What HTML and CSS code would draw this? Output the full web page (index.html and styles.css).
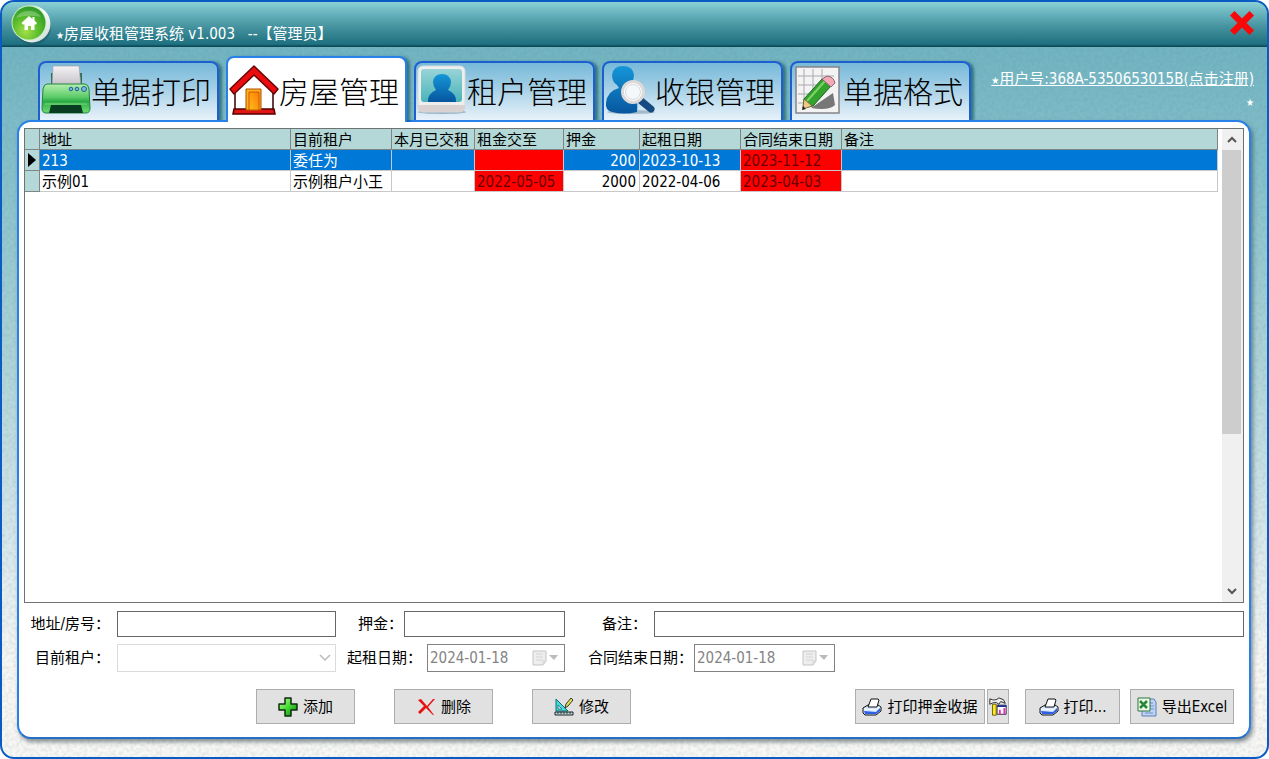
FILE: index.html
```html
<!DOCTYPE html>
<html lang="zh-CN">
<head>
<meta charset="utf-8">
<title>房屋收租管理系统</title>
<link rel="stylesheet" href="styles.css">
</head>
<body>
<div class="window">
  <svg class="grain" aria-hidden="true"><filter id="noise"><feTurbulence type="fractalNoise" baseFrequency="0.28" numOctaves="2"/><feColorMatrix values="0 0 0 0 0.1  0 0 0 0 0.25  0 0 0 0 0.3  1.6 0 0 0 -0.6"/></filter><rect width="100%" height="100%" filter="url(#noise)"/></svg>

  <header class="titlebar">
    <svg class="logo" viewBox="0 0 42 42" aria-hidden="true">
      <defs>
        <radialGradient id="orb" cx=".4" cy=".75" r=".75"><stop offset="0" stop-color="#a4e048"/><stop offset=".6" stop-color="#52b82a"/><stop offset="1" stop-color="#2f9a2c"/></radialGradient>
        <linearGradient id="ring" x2="1" y2="1"><stop offset="0" stop-color="#a8d8b0"/><stop offset=".5" stop-color="#fff"/><stop offset="1" stop-color="#c4d4d2"/></linearGradient>
      </defs>
      <ellipse cx="23" cy="23" rx="18" ry="18" fill="#1b5560" opacity=".5"/>
      <circle cx="22" cy="20" r="18.500" fill="url(#ring)"/>
      <circle cx="19" cy="19" r="17.500" fill="#c9ecc0"/>
      <circle cx="19" cy="19" r="16.500" fill="url(#orb)"/>
      <path d="M6 14a14 12 0 0 1 25-1Q18 10 6 14Z" fill="#fff" opacity=".25"/>
      <path d="m19 12-7.500 7 1.500 1.500h1.500V26h3.500v-4h3v4h3.500v-5.500h1.500l1-1.500-2.500-2.500V13h-2v2Z" fill="#fff"/>
    </svg>
    <h1 class="title"><span class="star">★</span>房屋收租管理系统 v1.003 &nbsp; --【管理员】</h1>
    <button class="close" type="button" aria-label="关闭"><svg viewBox="0 0 24 24"><path d="M3 3 21 21M21 3 3 21" stroke="#f80808" stroke-width="6"/></svg></button>
  </header>

  <nav class="tabs">
    <button class="tab" type="button">
      <svg viewBox="0 0 50 50" aria-hidden="true">
        <defs><linearGradient id="prn" x2="0" y2="1"><stop offset="0" stop-color="#b5efae"/><stop offset=".45" stop-color="#5ccb68"/><stop offset=".6" stop-color="#2cab45"/><stop offset="1" stop-color="#6fdc72"/></linearGradient><linearGradient id="paper" x2="0" y2="1"><stop offset="0" stop-color="#f4f2f4"/><stop offset="1" stop-color="#c4c0c6"/></linearGradient></defs>
        <path d="M10 8h31v14H10Z" fill="#2f6b55"/>
        <path d="M12 1h26l2 20H11Z" fill="url(#paper)" stroke="#9a98a0" stroke-width=".6"/>
        <path d="M6 19h38q3 0 4 5l1 19q0 5-4 5H5q-4 0-4-5l1-19q1-5 4-5Z" fill="url(#prn)" stroke="#1c8440"/>
        <path d="M10 40h30l2 8H8Z" fill="#093d22"/>
        <path d="M4 39h42" stroke="#a7eda0" opacity=".6"/>
        <g fill="#79b8e0" stroke="#205f98"><circle cx="30" cy="24" r="1.800"/><circle cx="36" cy="24" r="1.800"/><circle cx="43" cy="24" r="2.500"/></g>
      </svg>单据打印</button>
    <button class="tab active" type="button" aria-current="page">
      <svg viewBox="0 0 50 50" aria-hidden="true">
        <defs><linearGradient id="door" x1="1" y1="0" x2="0" y2="1"><stop offset="0" stop-color="#ff7b08"/><stop offset="1" stop-color="#ffbd19"/></linearGradient></defs>
        <path d="M6 23 25 7l19 16v22H6Z" fill="#fff" stroke="#300" stroke-width="1.500"/>
        <path d="M5 44h40l1 5H4Z" fill="#e21414" stroke="#500" stroke-width="1.500"/>
        <path d="M17 24h15v21H17Z" fill="#ffb21b" stroke="#b34b00"/>
        <path d="M20 27h10v18H20Z" fill="url(#door)" stroke="#c85800"/>
        <path d="M25 1 49 24l-4 5L25 10 5 29l-4-5Z" fill="#e90d10" stroke="#6b0505" stroke-width="1.500" stroke-linejoin="round"/>
      </svg>房屋管理</button>
    <button class="tab" type="button">
      <svg viewBox="0 0 50 50" aria-hidden="true">
        <defs><linearGradient id="photo" x2="0" y2="1"><stop offset="0" stop-color="#98d4d8"/><stop offset="1" stop-color="#48b4b8"/></linearGradient><linearGradient id="blue" x2="0" y2="1"><stop offset="0" stop-color="#1597d8"/><stop offset="1" stop-color="#07569f"/></linearGradient></defs>
        <ellipse cx="25" cy="47" rx="24" ry="2" fill="#6e8ca0" opacity=".6"/>
        <rect x="1" y="1" width="47" height="46" rx="5" fill="#eee" stroke="#d3dbe0"/>
        <path d="M1 40h47v2q0 5-5 5H6q-5 0-5-5Z" fill="#d9d2d2"/>
        <rect x="4" y="4" width="41" height="33" rx="3" fill="url(#photo)"/>
        <path d="M11 37q-1-8 8-12-3-4-3-8 1-8 9-8t9 8q0 4-3 8 9 4 8 12Z" fill="url(#blue)"/>
      </svg>租户管理</button>
    <button class="tab" type="button">
      <svg viewBox="0 0 50 50" aria-hidden="true">
        <ellipse cx="26" cy="47" rx="24" ry="2" fill="#6e8ca0" opacity=".5"/>
        <path d="M12 20Q7 17 7 10 8 1 18 1t11 9q0 5-3 9l-2 3q10 8 8 25-13 3-25 0Q0 45 1 38q1-12 13-15Z" fill="url(#blue)"/>
        <path d="m35 35 11 9" stroke="#174a80" stroke-width="7" stroke-linecap="round"/>
        <circle cx="28" cy="27" r="10.500" fill="#fff" stroke="#ddd9d8" stroke-width="3"/>
        <circle cx="28" cy="27" r="7.500" fill="#f4f8fa" stroke="#c9cfd2" stroke-width=".8"/>
      </svg>收银管理</button>
    <button class="tab" type="button">
      <svg viewBox="0 0 50 50" aria-hidden="true">
        <path d="M3 2h43v46H3Z" fill="#f4f3f4" stroke="#858589" stroke-width="1.500"/>
        <path d="M11 4v34M20 4v30M29 4v20M5 11h36M5 20h30M5 29h20M5 38h10" stroke="#a9a9b0"/>
        <path d="m18 43 22-15 2 12q-6 6-24 3Z" fill="#777"/>
        <path d="m11 34 18-20 9 7-18 20-10 2Z" fill="#33a32e" stroke="#23651f"/>
        <path d="m14 36 18-20" stroke="#7ed468" stroke-width="2"/>
        <path d="m29 14 5-3q7 1 8 7l-4 4Z" fill="#f4a9b9" stroke="#8d6570"/>
        <path d="m11 34 8 7-9 3Z" fill="#eecb8c" stroke="#765a28" stroke-width=".7"/>
        <path d="m10 41-1 4 4-1Z" fill="#222"/>
      </svg>单据格式</button>
    <a class="account" href="#"><span class="star">★</span>用户号:368A-5350653015B(点击注册)<br><span class="tail">★</span></a>
  </nav>

  <main class="panel">
    <section class="grid-box">
      <div class="grid-scroll">
        <table class="grid">
          <colgroup><col class="c-mark"><col class="c-addr"><col class="c-date"><col class="c-paid"><col class="c-until"><col class="c-deposit"><col class="c-date"><col class="c-date"><col></colgroup>
          <thead><tr><th></th><th>地址</th><th>目前租户</th><th>本月已交租</th><th>租金交至</th><th>押金</th><th>起租日期</th><th>合同结束日期</th><th>备注</th></tr></thead>
          <tbody>
            <tr class="selected"><td class="mark"><svg viewBox="0 0 8 14"><path d="M0 0v14l8-7Z"/></svg></td><td>213</td><td>委任为</td><td></td><td class="due"></td><td class="num">200</td><td>2023-10-13</td><td class="due">2023-11-12</td><td></td></tr>
            <tr><td class="mark"></td><td>示例01</td><td>示例租户小王</td><td></td><td class="due">2022-05-05</td><td class="num">2000</td><td>2022-04-06</td><td class="due">2023-04-03</td><td></td></tr>
          </tbody>
        </table>
      </div>
      <div class="scrollbar">
        <button type="button" aria-label="向上"><svg viewBox="0 0 10 7"><path d="m1 6 4-4 4 4"/></svg></button>
        <div class="track"><div class="thumb"></div></div>
        <button type="button" aria-label="向下"><svg viewBox="0 0 10 7"><path d="m1 1 4 4 4-4"/></svg></button>
      </div>
    </section>

    <form class="form">
      <div class="fields">
        <label class="l-first" for="addr">地址/房号：</label><input class="w-main" id="addr" type="text">
        <label class="l-deposit" for="deposit">押金：</label><input class="w-deposit" id="deposit" type="text">
        <label class="l-note" for="note">备注：</label><input class="w-note" id="note" type="text">
      </div>
      <div class="fields">
        <label class="l-first" for="tenant">目前租户：</label>
        <span class="combo w-main"><select id="tenant" disabled><option></option></select><svg viewBox="0 0 12 8"><path d="m1 1 5 5 5-5"/></svg></span>
        <label class="l-start" for="start">起租日期：</label>
        <span class="date w-start"><input id="start" type="text" value="2024-01-18" disabled><svg viewBox="0 0 26 16"><path d="M1 1h13v10l-3 4H1Z" fill="#eee" stroke="#c4c4c4"/><path d="M4 4h7M4 7h7M4 10h7M14 11h-3v4" fill="none" stroke="#d4d4d4"/><path d="M17 5h9l-4 5Z" fill="#bbb"/></svg></span>
        <label class="l-end" for="end">合同结束日期：</label>
        <span class="date w-end"><input id="end" type="text" value="2024-01-18" disabled><svg viewBox="0 0 26 16"><path d="M1 1h13v10l-3 4H1Z" fill="#eee" stroke="#c4c4c4"/><path d="M4 4h7M4 7h7M4 10h7M14 11h-3v4" fill="none" stroke="#d4d4d4"/><path d="M17 5h9l-4 5Z" fill="#bbb"/></svg></span>
      </div>
      <div class="actions">
        <div class="edit">
          <button class="btn" type="button"><svg viewBox="0 0 20 20"><defs><linearGradient id="plus" x2="1" y2="1"><stop offset="0" stop-color="#c8ff9c"/><stop offset=".5" stop-color="#43da32"/><stop offset="1" stop-color="#087a10"/></linearGradient></defs><path d="M7 1h6v6h6v6h-6v6H7v-6H1V7h6Z" fill="url(#plus)" stroke="#102c10" stroke-width="1.500" stroke-linejoin="round"/></svg>添加</button>
          <button class="btn" type="button"><svg viewBox="0 0 20 20"><path d="m2 3 3-1 6 7 6-7h2l-7 8 6 8h-1l-7-7-6 6-2-2 6-6Z" fill="#e81010"/></svg>删除</button>
          <button class="btn" type="button"><svg viewBox="0 0 20 20"><path d="M2 2v12h12Z" fill="#43dada" stroke="#126c78"/><path d="M4 8v4h4Z" fill="#e1e1e1" stroke="#126c78" stroke-width=".7"/><path d="m11 11 1-4 5-6 2 2-5 6Z" fill="#e6df59" stroke="#343820"/><path d="M1 15h18v3H1Z" fill="#b8dce0" stroke="#222"/><path d="M4 15v2M7 15v2M10 15v2M13 15v2M16 15v2" stroke="#222" stroke-width=".8"/></svg>修改</button>
        </div>
        <div class="pair">
          <button class="btn w-receipt" type="button"><svg viewBox="0 0 20 20"><path d="m1 11 5-3h10l3 2v4l-5 4H3l-2-2Z" fill="#d5e6ff" stroke="#111"/><path d="m6 10 3-8h7l1 1-2 7Z" fill="#fff" stroke="#111"/><path d="m2 14 12 1 4-4v3l-4 3H3Z" fill="#2f5fe6"/><path d="m2 12 11 1 5-3" fill="none" stroke="#fff"/></svg>打印押金收据</button>
          <button class="btn w-tool" type="button" aria-label="打印设置"><svg viewBox="0 0 20 22"><path d="M1 2q6 3 10-1l5 2 2 4-5-2-2 3-3-2q-4 0-7 2Z" fill="#eee" stroke="#222"/><path d="M9 9h10v10H9Z" fill="#fff" stroke="#202040"/><path d="M9 10h10" stroke="#203090" stroke-width="2"/><path d="M12 14v5M17 12v7" stroke="#e52bb0" stroke-width="2"/><path d="M4 8h4v12H4Z" fill="#ffed20" stroke="#665b00"/></svg></button>
        </div>
        <div class="output">
          <button class="btn w-print" type="button"><svg viewBox="0 0 20 20"><path d="m1 11 5-3h10l3 2v4l-5 4H3l-2-2Z" fill="#d5e6ff" stroke="#111"/><path d="m6 10 3-8h7l1 1-2 7Z" fill="#fff" stroke="#111"/><path d="m2 14 12 1 4-4v3l-4 3H3Z" fill="#2f5fe6"/><path d="m2 12 11 1 5-3" fill="none" stroke="#fff"/></svg>打印...</button>
          <button class="btn w-excel" type="button"><svg viewBox="0 0 20 20"><path d="M8 2h9l2 3v14H5v-5" fill="#bfd4f3" stroke="#5c80b4"/><path d="M11 6h5M13 9h4M13 12h4M8 16h8" stroke="#6b91ca"/><path d="M1 1h12v13H1Z" fill="#edf8e9" stroke="#2c7540"/><path d="m3 4 7 7M10 4l-7 7" stroke="#278736" stroke-width="2.500"/></svg>导出Excel</button>
        </div>
      </div>
    </form>
  </main>
</div>
</body>
</html>
```
FILE: styles.css
```css
* { box-sizing: border-box; }

body {
  margin: 0;
  background: #fff;
  color: #000;
  font: 15px/20px "DejaVu Sans Condensed", "Noto Sans CJK SC", sans-serif;
}

button, input, select { font: inherit; color: inherit; }
svg { display: block; flex: none; }

.window {
  position: relative;
  display: flex;
  flex-direction: column;
  min-height: 100vh;
  overflow: hidden;
  border: 2px solid #0a5cc4;
  border-radius: 14px;
  background: linear-gradient(#72b4c1 45px, #82bfca 20%, #a9d1d6 45%, #d6e6eb 70%, #f8f7f4 88%);
}

.grain {
  position: absolute;
  inset: 0;
  width: 100%;
  height: 100%;
  opacity: .2;
}

.titlebar {
  position: relative;
  display: flex;
  height: 45px;
  padding: 0 12px 0 8px;
  background: linear-gradient(#8bd0d6, #62aeb9 30%, #408e9b 60%, #1e7080 94%, #0d4b5b 98%);
}
.logo { width: 42px; height: 42px; margin-top: 2px; }
.title {
  margin: 22px auto 0 4px;
  color: #fff;
  font-size: 15px;
  font-weight: 400;
  line-height: 20px;
  white-space: nowrap;
}
.star, .tail { font-size: 10px; }
.close {
  width: 26px;
  height: 26px;
  margin-top: 8px;
  padding: 0;
  border: 0;
  background: none;
}

.tabs {
  position: relative;
  z-index: 1;
  display: flex;
  align-items: flex-end;
  gap: 7px;
  height: 73px;
  padding: 0 13px 0 36px;
}
.tab {
  display: flex;
  align-items: center;
  width: 181px;
  height: 59px;
  padding: 0 0 4px 1px;
  border: 2px solid #1e5fd0;
  border-bottom: 0;
  border-radius: 8px 8px 0 0;
  background: linear-gradient(#76b9d9, #a6d0e6 45%, #e8f2fa);
  box-shadow: 3px 1px 3px #0a4a5a99;
  clip-path: inset(-4px -8px 0 -4px);
  font: 300 30px/40px "Noto Sans CJK SC Light", "Noto Sans CJK SC", sans-serif;
  white-space: nowrap;
}
.tab svg { width: 50px; height: 50px; }
.tab.active {
  height: 66px;
  margin-bottom: -2px;
  padding-bottom: 0;
  border-color: #2880e8;
  background: #fff;
}
.account {
  align-self: flex-start;
  margin: 22px 0 0 auto;
  color: #fff;
  text-align: right;
  white-space: nowrap;
}
.tail { display: inline-block; }

.panel {
  position: relative;
  display: flex;
  flex: 1;
  flex-direction: column;
  margin: 0 16px 18px 15px;
  padding: 6px 5px 13px;
  border: 2px solid #2880e8;
  border-bottom-color: #256fc4;
  border-radius: 14px;
  background: #fff;
  box-shadow: 2px 3px 4px #3a4a5599;
}

.grid-box {
  display: flex;
  flex: 1;
  min-height: 200px;
  border: 1px solid #6d7272;
}
.grid-scroll { flex: 1; min-width: 0; padding-right: 4px; }
.grid {
  width: 100%;
  table-layout: fixed;
  border-spacing: 0;
}
.c-mark { width: 15px; }
.c-addr { width: 251px; }
.c-date { width: 101px; }
.c-paid { width: 83px; }
.c-until { width: 89px; }
.c-deposit { width: 76px; }
.grid th, .grid td {
  height: 21px;
  padding: 2px 3px 0 2px;
  border: 0 solid #c8c8c8;
  border-width: 0 1px 1px 0;
  font-weight: 400;
  line-height: 18px;
  text-align: left;
  white-space: nowrap;
}
.grid th, .grid td.mark { border-color: #808484; background: #b4d8d8; }
.grid td.mark { padding: 0 3px; }
.mark svg { width: 8px; height: 14px; }
.grid .selected td:not(.mark) { background: #0078d7; color: #fff; }
.grid td.num { text-align: right; }
.grid td.due, .grid .selected td.due { background: #f00; color: #600; }

.scrollbar {
  display: flex;
  flex-direction: column;
  width: 21px;
  padding-right: 2px;
  background: #f0f0f0;
}
.scrollbar button {
  display: grid;
  place-items: center;
  height: 21px;
  padding: 0;
  border: 0;
  background: #f0f0f0;
}
.scrollbar svg { width: 10px; height: 7px; }
.scrollbar path { fill: none; stroke: #555; stroke-width: 2; }
.track { flex: 1; }
.thumb { height: 66%; background: #cdcdcd; }

.form { display: flex; flex-direction: column; gap: 7px; padding-top: 8px; }
.fields { display: flex; align-items: center; }
.fields label { flex: none; padding-right: 7px; text-align: right; white-space: nowrap; }
.l-first { width: 93px; }
.fields .l-deposit { width: 68px; padding-right: 1px; }
.l-note { width: 89px; }
.fields .l-start { width: 91px; padding-right: 5px; }
.fields .l-end { width: 129px; padding-right: 1px; }
.w-main { width: 219px; }
.w-deposit { width: 161px; }
.w-note { flex: 1; min-width: 0; }
.w-start { width: 138px; }
.w-end { width: 141px; }
.fields input {
  height: 26px;
  padding: 0 2px;
  border: 1px solid #666;
  border-radius: 0;
  background: #fff;
}
.combo, .date { position: relative; display: flex; height: 28px; }
.combo select {
  width: 100%;
  border: 1px solid #ccc;
  border-radius: 0;
  background: #fff;
  appearance: none;
}
.combo svg { position: absolute; top: 10px; right: 5px; width: 12px; height: 8px; }
.combo path { fill: none; stroke: #bbb; stroke-width: 1.5; }
.fields .date input { width: 100%; height: 28px; border-color: #828282; color: #838383; }
.date svg { position: absolute; top: 6px; right: 7px; width: 26px; height: 16px; }

.actions { display: flex; align-items: center; padding: 10px 10px 0 232px; }
.edit { display: flex; gap: 39px; }
.pair { display: flex; gap: 2px; margin-left: auto; }
.output { display: flex; gap: 10px; margin-left: 16px; }
.btn {
  display: flex;
  align-items: center;
  justify-content: center;
  gap: 5px;
  width: 99px;
  height: 35px;
  padding: 0;
  border: 1px solid #adadad;
  background: #e1e1e1;
  white-space: nowrap;
}
.btn svg { width: 20px; height: 20px; }
.w-receipt { width: 130px; }
.w-tool { width: 22px; }
.w-print { width: 95px; }
.w-excel { width: 104px; }
```
